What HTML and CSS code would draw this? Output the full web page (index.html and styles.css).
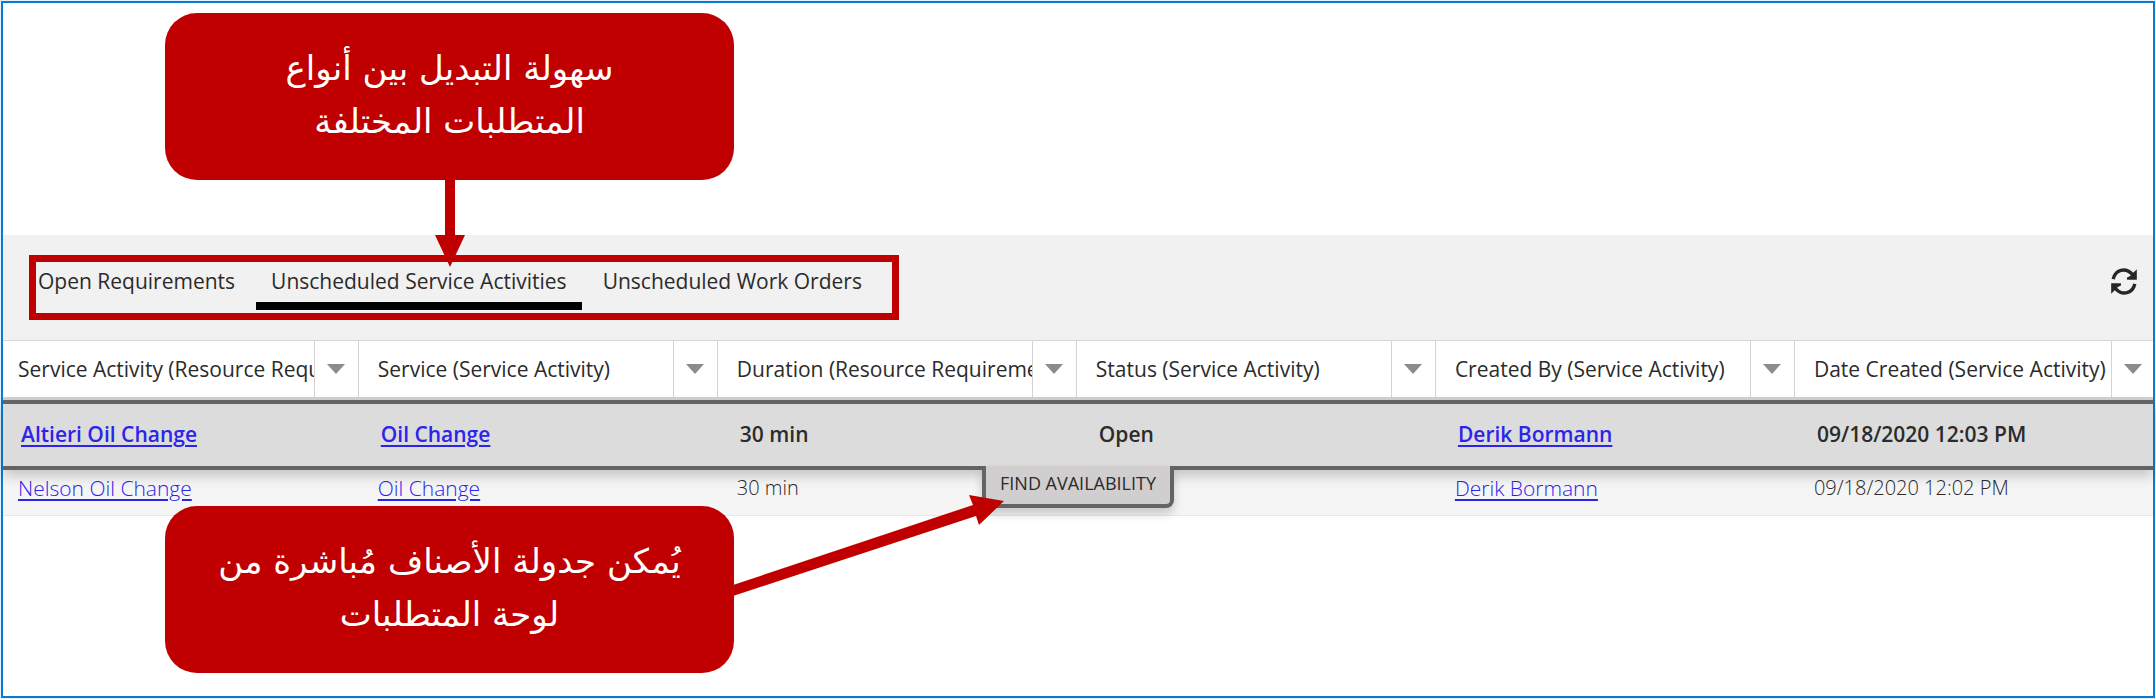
FILE: index.html
```html
<!DOCTYPE html>
<html lang="en">
<head>
<meta charset="utf-8">
<title>Schedule board requirements</title>
<link rel="stylesheet" href="styles.css">
</head>
<body>
<main class="board">
  <section class="panel">
    <div class="toolbar">
      <nav class="tabs" aria-label="Requirement types">
        <button class="tab" type="button">Open Requirements</button>
        <button class="tab tab-active" type="button">Unscheduled Service Activities</button>
        <button class="tab" type="button">Unscheduled Work Orders</button>
        <span class="highlight"></span>
      </nav>
      <button class="refresh" type="button" aria-label="Refresh">
        <svg viewBox="0 0 76 80" width="26" height="27" aria-hidden="true">
          <g id="arc">
            <path d="M6 33C12 5 42 -4 63 19" fill="none" stroke="#262626" stroke-width="10"/>
            <path d="M76 4V35H47V28L56 24L66 13Z" fill="#262626"/>
          </g>
          <use href="#arc" transform="rotate(180 38 40)"/>
        </svg>
      </button>
    </div>

    <table class="grid">
      <thead>
        <tr>
          <th scope="col"><div class="head"><span class="label">Service Activity (Resource Requirement)</span><button class="menu" type="button" aria-label="Column options"></button></div></th>
          <th scope="col"><div class="head"><span class="label">Service (Service Activity)</span><button class="menu" type="button" aria-label="Column options"></button></div></th>
          <th scope="col"><div class="head"><span class="label">Duration (Resource Requirement)</span><button class="menu" type="button" aria-label="Column options"></button></div></th>
          <th scope="col"><div class="head"><span class="label">Status (Service Activity)</span><button class="menu" type="button" aria-label="Column options"></button></div></th>
          <th scope="col"><div class="head"><span class="label">Created By (Service Activity)</span><button class="menu" type="button" aria-label="Column options"></button></div></th>
          <th scope="col"><div class="head"><span class="label">Date Created (Service Activity)</span><button class="menu" type="button" aria-label="Column options"></button></div></th>
        </tr>
      </thead>
      <tbody>
        <tr class="selected">
          <td><a href="#">Altieri Oil Change</a></td>
          <td><a href="#">Oil Change</a></td>
          <td>30 min</td>
          <td>Open<button class="find" type="button">FIND AVAILABILITY</button></td>
          <td><a href="#">Derik Bormann</a></td>
          <td>09/18/2020 12:03 PM</td>
        </tr>
        <tr class="plain">
          <td><a href="#">Nelson Oil Change</a></td>
          <td><a href="#">Oil Change</a></td>
          <td class="value">30 min</td>
          <td></td>
          <td><a href="#">Derik Bormann</a></td>
          <td class="value">09/18/2020 12:02 PM</td>
        </tr>
      </tbody>
    </table>
  </section>

  <aside class="callout callout-top" lang="ar" dir="rtl">سهولة التبديل بين أنواع<br>المتطلبات المختلفة</aside>
  <svg class="arrow arrow-down" width="32" height="88" viewBox="0 0 32 88" aria-hidden="true">
    <path d="M11 0H21V56H31L16 88L1 56H11Z" fill="#c00000"/>
  </svg>

  <aside class="callout callout-bottom" lang="ar" dir="rtl">يُمكن جدولة الأصناف مُباشرة من<br>لوحة المتطلبات</aside>
  <svg class="arrow arrow-side" width="272" height="102" viewBox="0 0 272 102" aria-hidden="true">
    <path d="M0 90L240 10L236 0L271 6L246 30L243 21L0 101Z" fill="#c00000"/>
  </svg>
</main>
</body>
</html>
```
FILE: styles.css
```css
* {
  box-sizing: border-box;
}

body {
  margin: 0;
  background: #e6f1fa;
  color: #2b2b2b;
  font-family: "Open Sans", "Noto Sans", sans-serif;
  font-size: 21px;
  line-height: 28px;
}

button {
  margin: 0;
  border: 0;
  background: none;
  color: inherit;
  font: inherit;
  cursor: pointer;
}

.board {
  position: relative;
  min-height: calc(100vh - 2px);
  margin: 1px;
  padding-top: 232px;
  border: 2px solid #0a7bd4;
  background: #fff;
}

.panel {
  border-top: 1px solid #f0f0f0;
}

/* Toolbar */
.toolbar {
  display: flex;
  justify-content: space-between;
  align-items: flex-start;
  padding: 24px 14px 30px 20px;
  border-bottom: 1px solid #d6d6d6;
  background: #f1f1f1;
}

.tabs {
  position: relative;
  display: flex;
  gap: 6px;
}

.tab {
  height: 50px;
  padding: 0 15px;
  border-bottom: 8px solid transparent;
  white-space: nowrap;
}

.tab-active {
  border-bottom-color: #000;
}

.highlight {
  position: absolute;
  inset: -5px -22px -10px 6px;
  border: 7px solid #c00000;
  pointer-events: none;
}

.refresh {
  display: flex;
  padding: 8px 2px;
}

/* Grid */
.grid {
  width: 100%;
  border-spacing: 0;
  table-layout: fixed;
}

th,
td {
  padding: 0;
  text-align: left;
}

th {
  border-bottom: 3px solid #d2d2d2;
  font-weight: 400;
}

th:first-child {
  width: 16.5%;
}

th + th {
  border-left: 1px solid #d4d4d4;
}

.head {
  display: flex;
  height: 56px;
}

.label {
  flex: 1;
  min-width: 0;
  overflow: hidden;
  padding: 14px 0 14px 19px;
  white-space: nowrap;
}

th:first-child .label {
  padding-left: 15px;
}

.menu {
  display: flex;
  flex: none;
  align-items: center;
  justify-content: center;
  width: 44px;
  padding: 0;
  border-left: 1px solid #d4d4d4;
}

th:last-child .menu {
  width: 42px;
}

.menu::before {
  content: "";
  border: 9px solid transparent;
  border-top: 10px solid #8c8c8c;
  border-bottom: 0;
}

a {
  color: #2d24ea;
  text-decoration-thickness: 2px;
  text-underline-offset: 3px;
}

.selected {
  position: relative;
  z-index: 1;
  box-shadow: 0 6px 12px rgba(0, 0, 0, 0.2);
  font-weight: 600;
}

.selected td {
  height: 70px;
  padding: 0 0 2px 23px;
  border: solid #646464;
  border-width: 4px 0;
  background: #dcdcdc;
}

.selected td:first-child {
  padding-left: 18px;
}

.plain td {
  height: 46px;
  padding: 0 0 10px 20px;
  border-bottom: 1px solid #e8e8e8;
  background: #f5f5f5;
  font-weight: 300;
}

.plain td:first-child {
  padding-left: 15px;
}

.plain .value {
  font-size: 20px;
}

.find {
  position: absolute;
  top: calc(100% - 4px);
  left: 50%;
  width: 192px;
  padding: 3px 0 7px;
  border: solid #646464;
  border-width: 0 4px 4px;
  border-radius: 0 0 8px 8px;
  background: #d0cece;
  box-shadow: 0 6px 10px rgba(0, 0, 0, 0.18);
  font-size: 18px;
  font-weight: 500;
  transform: translateX(-50%);
}

/* Annotations */
.callout {
  position: absolute;
  left: 162px;
  width: 569px;
  padding: 29px 24px 32px;
  border-radius: 32px;
  background: #c00000;
  color: #fff;
  font-family: "DejaVu Sans", sans-serif;
  font-size: 34px;
  line-height: 53px;
  text-align: center;
}

.callout-top {
  top: 10px;
}

.callout-bottom {
  top: 503px;
}

.arrow {
  position: absolute;
  z-index: 2;
}

.arrow-down {
  top: 176px;
  left: 431px;
}

.arrow-side {
  top: 492px;
  left: 730px;
}
```
